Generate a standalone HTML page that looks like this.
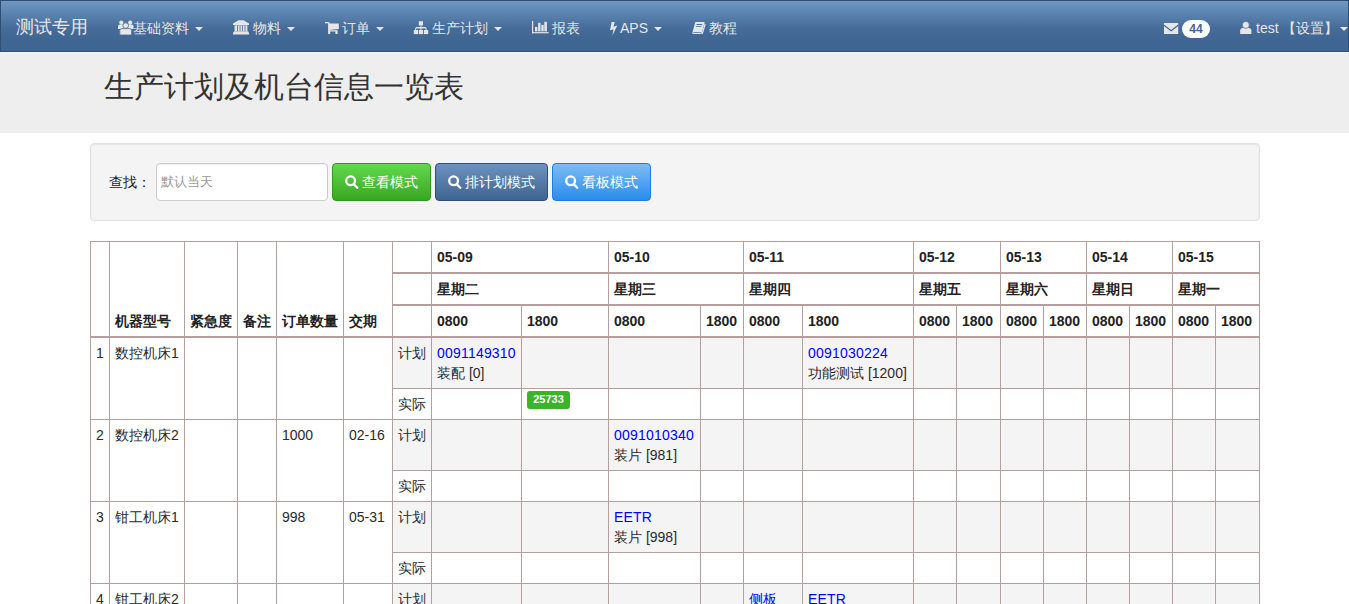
<!DOCTYPE html><html><head><meta charset="utf-8"><style>
*{box-sizing:border-box}
html,body{margin:0;padding:0;width:1349px;height:604px;overflow:hidden;background:#fff;
font-family:"Liberation Sans",sans-serif;font-size:14px;color:#333;line-height:20px}
.abs{position:absolute}
.abs>svg{display:block}
.nav{position:absolute;left:0;top:0;width:1349px;height:52px;border:1px solid #2e4e72;
background:linear-gradient(to bottom,#6e97c3 0%,#5981ae 28%,#456b98 55%,#3f6692 80%,#3e6692 100%)}
.nt{position:absolute;color:#e6e6e6;font-size:14px;line-height:20px;white-space:nowrap}
.caret{position:absolute;width:0;height:0;border-left:4px solid transparent;border-right:4px solid transparent;border-top:4px solid #e6e6e6}
.jumbo{position:absolute;left:0;top:52px;width:1349px;height:81px;background:#eee;border-top:1px solid #f8f6f4}
.well{position:absolute;left:90px;top:143px;width:1170px;height:78px;background:#f4f4f4;border:1px solid #e0e0e0;border-radius:4px;
box-shadow:inset 0 1px 2px rgba(0,0,0,.06)}
.btn{position:absolute;top:163px;height:38px;border-radius:4px;color:#fff;font-size:14px;line-height:20px;white-space:nowrap}
.vl{position:absolute;width:1px;background:#b49e9e}
.hl{position:absolute;height:1px;background:#b49e9e}
.t{position:absolute;white-space:nowrap;font-size:14px;line-height:20px;color:#2a2a2a}
.b{font-weight:bold;color:#222}
.lk{color:#0000ff;letter-spacing:0.2px}
.gray{position:absolute;background:#f4f4f4}
</style></head><body>

<div class="nav"></div>
<div class="nt" style="left:16px;top:16px;font-size:18px;line-height:22px;color:#e8e8e8">测试专用</div>
<div class="abs" style="left:118px;top:20px;line-height:0"><svg width="16" height="15" viewBox="0 0 16 15"><g fill="#e6e6e6"><circle cx="3.3" cy="2.6" r="2.1"/><circle cx="12.2" cy="2.6" r="2.1"/><path d="M0 9V6.3Q0 4.6 2 4.6H4.6Q6.5 4.6 6.5 6.3V9z"/><path d="M9 9V6.3Q9 4.6 11 4.6H13.5Q15.5 4.6 15.5 6.3V9z"/></g><g fill="#e6e6e6" stroke="#52799f" stroke-width="0.9"><circle cx="7.7" cy="5.6" r="2.8"/><path d="M1.8 15V10.2Q1.8 8.6 4 8.6H11.4Q13.6 8.6 13.6 10.2V15z"/></g></svg></div>
<div class="nt" style="left:133px;top:18px">基础资料</div>
<div class="caret" style="left:195px;top:27px"></div>
<div class="abs" style="left:233px;top:20px;line-height:0"><svg width="16" height="15" viewBox="0 0 16 15"><g fill="#e6e6e6"><path d="M5.5 0.2H10.5L16 3.6V4.9H0V3.6z"/><path d="M1.6 5.3H14.4V11H1.6z"/><path d="M1 11.2H15L16 13V14.6H0V13z"/></g><g fill="#4d74a0"><rect x="4.1" y="5.3" width="0.9" height="5.7"/><rect x="6.6" y="5.3" width="0.9" height="5.7"/><rect x="9.1" y="5.3" width="0.9" height="5.7"/><rect x="11.6" y="5.3" width="0.9" height="5.7"/></g></svg></div>
<div class="nt" style="left:253px;top:18px">物料</div>
<div class="caret" style="left:287px;top:27px"></div>
<div class="abs" style="left:325px;top:22px;line-height:0"><svg width="14" height="12" viewBox="0 0 14 12"><g fill="#e6e6e6"><rect x="0" y="0" width="3.6" height="1.3"/><path d="M3.1 0.6H4.5V1.4H13.8V6.9L4.6 7.9V8.3H12.6V12H10.4V9.6H5.2V12H3.1z"/></g></svg></div>
<div class="nt" style="left:342px;top:18px">订单</div>
<div class="caret" style="left:376px;top:27px"></div>
<div class="abs" style="left:413px;top:21px;line-height:0"><svg width="16" height="14" viewBox="0 0 16 14"><g fill="#e6e6e6"><rect x="5.8" y="0.2" width="4.2" height="4.3"/><rect x="7.5" y="4.5" width="0.9" height="2"/><path d="M2.2 9V7.6Q2.2 6.1 3.7 6.1H12.1Q13.6 6.1 13.6 7.6V9H12.7V7.4H8.4V9H7.5V7.4H3.1V9z"/><rect x="0.8" y="9" width="4.2" height="4.1"/><rect x="5.8" y="9" width="4.2" height="4.1"/><rect x="10.9" y="9" width="4.3" height="4.1"/></g></svg></div>
<div class="nt" style="left:432px;top:18px">生产计划</div>
<div class="caret" style="left:494px;top:27px"></div>
<div class="abs" style="left:532px;top:21px;line-height:0"><svg width="17" height="13" viewBox="0 0 17 13"><g fill="#e6e6e6"><rect x="0" y="0" width="1.2" height="12.3"/><rect x="0" y="11.1" width="16.6" height="1.2"/><rect x="3" y="5.9" width="2.4" height="4.5"/><rect x="6.1" y="1.8" width="2.4" height="8.6"/><rect x="9.3" y="3.9" width="2.4" height="6.5"/><rect x="12.3" y="0.8" width="2.6" height="9.6"/></g></svg></div>
<div class="nt" style="left:552px;top:18px">报表</div>
<div class="abs" style="left:610px;top:22px;line-height:0"><svg width="8" height="14" viewBox="0 0 8 14"><path fill="#e6e6e6" d="M1.6 0H4.7L3.5 4.7L7.3 3.6L2.4 13.6L3.5 7.3L0 8.3z"/></svg></div>
<div class="nt" style="left:620px;top:18px">APS</div>
<div class="caret" style="left:654px;top:27px"></div>
<div class="abs" style="left:692px;top:22px;line-height:0"><svg width="14" height="12" viewBox="0 0 14 12"><g fill="#e6e6e6"><path d="M3.3 0H12.2Q12.8 0 12.6 0.6L9.7 11.3Q9.5 11.9 8.9 11.9H0.9Q0.1 11.9 0.3 11.1z"/><path d="M12.6 1.4L13.7 2.6L11 11.5Q10.8 12 10.2 12H9.6z"/></g><g fill="#4a709c"><path d="M4.6 2.1H10.3L10.1 2.9H4.4z"/><path d="M4 4.2H9.7L9.5 5H3.8z"/><path d="M1.3 10.1H9.3L9.1 10.8H1.1z"/></g></svg></div>
<div class="nt" style="left:709px;top:18px">教程</div>
<div class="abs" style="left:1164px;top:23px;line-height:0"><svg width="15" height="12" viewBox="0 0 15 12"><rect x="0" y="0" width="14.2" height="11" fill="#e6e6e6"/><path d="M0 2.2L7.1 7.7L14.2 2.2" fill="none" stroke="#41668f" stroke-width="1.1"/></svg></div>
<div class="abs" style="left:1182px;top:20px;width:28px;height:18px;border-radius:9px;background:#fff;color:#3f6692;font-size:12px;font-weight:bold;line-height:18px;text-align:center">44</div>
<div class="abs" style="left:1240px;top:21px;line-height:0"><svg width="12" height="13" viewBox="0 0 12 13"><path fill="#e6e6e6" d="M0.2 12.9V9.6Q0.2 6.9 3 6.9H8.6Q11.4 6.9 11.4 9.6V12.9z"/><circle cx="5.8" cy="3.9" r="3.5" fill="#e6e6e6" stroke="#47709c" stroke-width="0.7"/></svg></div>
<div class="nt" style="left:1256px;top:18px">test 【设置】</div>
<div class="caret" style="left:1340px;top:27px"></div>
<div class="jumbo"></div>
<div class="t" style="left:104px;top:70px;font-size:30px;line-height:34px;color:#333">生产计划及机台信息一览表</div>
<div class="well"></div>
<div class="t" style="left:109px;top:172px;color:#1a1a1a">查找：</div>
<div class="abs" style="left:156px;top:163px;width:172px;height:38px;background:#fff;border:1px solid #ccc;border-radius:4px;box-shadow:inset 0 1px 1px rgba(0,0,0,.075)"></div>
<div class="t" style="left:161px;top:172px;color:#999;font-size:13px">默认当天</div>
<div class="btn" style="left:332px;width:99px;background:linear-gradient(#62d94d,#3aa622);border:1px solid #2e9a1c"></div>
<div class="abs" style="left:345px;top:175px;line-height:0"><svg width="14" height="14" viewBox="0 0 14 14"><g fill="none" stroke="#fff" stroke-width="2.3"><circle cx="5.6" cy="5.8" r="4.4"/><path d="M8.8 9.2L12.3 12.8" stroke-linecap="round"/></g></svg></div>
<div class="t" style="left:362px;top:172px;color:#fff">查看模式</div>
<div class="btn" style="left:435px;width:113px;background:linear-gradient(#6c93c0,#3e6591);border:1px solid #2f507a"></div>
<div class="abs" style="left:448px;top:175px;line-height:0"><svg width="14" height="14" viewBox="0 0 14 14"><g fill="none" stroke="#fff" stroke-width="2.3"><circle cx="5.6" cy="5.8" r="4.4"/><path d="M8.8 9.2L12.3 12.8" stroke-linecap="round"/></g></svg></div>
<div class="t" style="left:465px;top:172px;color:#fff">排计划模式</div>
<div class="btn" style="left:552px;width:99px;background:linear-gradient(#7dbcf6,#2a8ceb);border:1px solid #1a7ee0"></div>
<div class="abs" style="left:565px;top:175px;line-height:0"><svg width="14" height="14" viewBox="0 0 14 14"><g fill="none" stroke="#fff" stroke-width="2.3"><circle cx="5.6" cy="5.8" r="4.4"/><path d="M8.8 9.2L12.3 12.8" stroke-linecap="round"/></g></svg></div>
<div class="t" style="left:582px;top:172px;color:#fff">看板模式</div>
<div class="gray" style="left:392px;top:338px;width:867px;height:50px"></div>
<div class="gray" style="left:392px;top:420px;width:867px;height:50px"></div>
<div class="gray" style="left:392px;top:502px;width:867px;height:50px"></div>
<div class="gray" style="left:392px;top:584px;width:867px;height:50px"></div>
<div class="hl" style="left:90px;top:241px;width:1170px"></div>
<div class="hl" style="left:392px;top:272px;width:868px;height:2px"></div>
<div class="hl" style="left:392px;top:304px;width:868px;height:2px"></div>
<div class="hl" style="left:90px;top:336px;width:1170px;height:2px"></div>
<div class="hl" style="left:392px;top:388px;width:868px"></div>
<div class="hl" style="left:392px;top:470px;width:868px"></div>
<div class="hl" style="left:392px;top:552px;width:868px"></div>
<div class="hl" style="left:90px;top:419px;width:1170px"></div>
<div class="hl" style="left:90px;top:501px;width:1170px"></div>
<div class="hl" style="left:90px;top:583px;width:1170px"></div>
<div class="vl" style="left:90px;top:241px;height:363px"></div>
<div class="vl" style="left:109px;top:241px;height:363px"></div>
<div class="vl" style="left:184px;top:241px;height:363px"></div>
<div class="vl" style="left:237px;top:241px;height:363px"></div>
<div class="vl" style="left:276px;top:241px;height:363px"></div>
<div class="vl" style="left:343px;top:241px;height:363px"></div>
<div class="vl" style="left:392px;top:241px;height:363px"></div>
<div class="vl" style="left:431px;top:241px;height:363px"></div>
<div class="vl" style="left:521px;top:305px;height:299px"></div>
<div class="vl" style="left:608px;top:241px;height:363px"></div>
<div class="vl" style="left:700px;top:305px;height:299px"></div>
<div class="vl" style="left:743px;top:241px;height:363px"></div>
<div class="vl" style="left:802px;top:305px;height:299px"></div>
<div class="vl" style="left:913px;top:241px;height:363px"></div>
<div class="vl" style="left:956px;top:305px;height:299px"></div>
<div class="vl" style="left:1000px;top:241px;height:363px"></div>
<div class="vl" style="left:1043px;top:305px;height:299px"></div>
<div class="vl" style="left:1086px;top:241px;height:363px"></div>
<div class="vl" style="left:1129px;top:305px;height:299px"></div>
<div class="vl" style="left:1172px;top:241px;height:363px"></div>
<div class="vl" style="left:1215px;top:305px;height:299px"></div>
<div class="vl" style="left:1259px;top:241px;height:363px"></div>
<div class="t b" style="left:115px;top:311px">机器型号</div>
<div class="t b" style="left:190px;top:311px">紧急度</div>
<div class="t b" style="left:243px;top:311px">备注</div>
<div class="t b" style="left:282px;top:311px">订单数量</div>
<div class="t b" style="left:349px;top:311px">交期</div>
<div class="t b" style="left:437px;top:247px">05-09</div>
<div class="t b" style="left:437px;top:279px">星期二</div>
<div class="t b" style="left:614px;top:247px">05-10</div>
<div class="t b" style="left:614px;top:279px">星期三</div>
<div class="t b" style="left:749px;top:247px">05-11</div>
<div class="t b" style="left:749px;top:279px">星期四</div>
<div class="t b" style="left:919px;top:247px">05-12</div>
<div class="t b" style="left:919px;top:279px">星期五</div>
<div class="t b" style="left:1006px;top:247px">05-13</div>
<div class="t b" style="left:1006px;top:279px">星期六</div>
<div class="t b" style="left:1092px;top:247px">05-14</div>
<div class="t b" style="left:1092px;top:279px">星期日</div>
<div class="t b" style="left:1178px;top:247px">05-15</div>
<div class="t b" style="left:1178px;top:279px">星期一</div>
<div class="t b" style="left:437px;top:311px">0800</div>
<div class="t b" style="left:527px;top:311px">1800</div>
<div class="t b" style="left:614px;top:311px">0800</div>
<div class="t b" style="left:706px;top:311px">1800</div>
<div class="t b" style="left:749px;top:311px">0800</div>
<div class="t b" style="left:808px;top:311px">1800</div>
<div class="t b" style="left:919px;top:311px">0800</div>
<div class="t b" style="left:962px;top:311px">1800</div>
<div class="t b" style="left:1006px;top:311px">0800</div>
<div class="t b" style="left:1049px;top:311px">1800</div>
<div class="t b" style="left:1092px;top:311px">0800</div>
<div class="t b" style="left:1135px;top:311px">1800</div>
<div class="t b" style="left:1178px;top:311px">0800</div>
<div class="t b" style="left:1221px;top:311px">1800</div>
<div class="t " style="left:96px;top:343px">1</div>
<div class="t " style="left:115px;top:343px">数控机床1</div>
<div class="t " style="left:398px;top:343px">计划</div>
<div class="t " style="left:398px;top:394px">实际</div>
<div class="t lk" style="left:437px;top:343px">0091149310</div>
<div class="t " style="left:437px;top:363px">装配 [0]</div>
<div class="t lk" style="left:808px;top:343px">0091030224</div>
<div class="t " style="left:808px;top:363px">功能测试 [1200]</div>
<div class="t " style="left:96px;top:425px">2</div>
<div class="t " style="left:115px;top:425px">数控机床2</div>
<div class="t " style="left:282px;top:425px">1000</div>
<div class="t " style="left:349px;top:425px">02-16</div>
<div class="t " style="left:398px;top:425px">计划</div>
<div class="t " style="left:398px;top:476px">实际</div>
<div class="t lk" style="left:614px;top:425px">0091010340</div>
<div class="t " style="left:614px;top:445px">装片 [981]</div>
<div class="t " style="left:96px;top:507px">3</div>
<div class="t " style="left:115px;top:507px">钳工机床1</div>
<div class="t " style="left:282px;top:507px">998</div>
<div class="t " style="left:349px;top:507px">05-31</div>
<div class="t " style="left:398px;top:507px">计划</div>
<div class="t " style="left:398px;top:558px">实际</div>
<div class="t lk" style="left:614px;top:507px">EETR</div>
<div class="t " style="left:614px;top:527px">装片 [998]</div>
<div class="t " style="left:96px;top:589px">4</div>
<div class="t " style="left:115px;top:589px">钳工机床2</div>
<div class="t " style="left:398px;top:589px">计划</div>
<div class="t " style="left:398px;top:640px">实际</div>
<div class="t lk" style="left:749px;top:589px">侧板</div>
<div class="t lk" style="left:808px;top:589px">EETR</div>
<div class="abs" style="left:527px;top:391px;width:43px;height:18px;border-radius:3px;background:#3cb427;color:#fff;font-weight:bold;font-size:11px;line-height:16px;text-align:center">25733</div>
</body></html>
